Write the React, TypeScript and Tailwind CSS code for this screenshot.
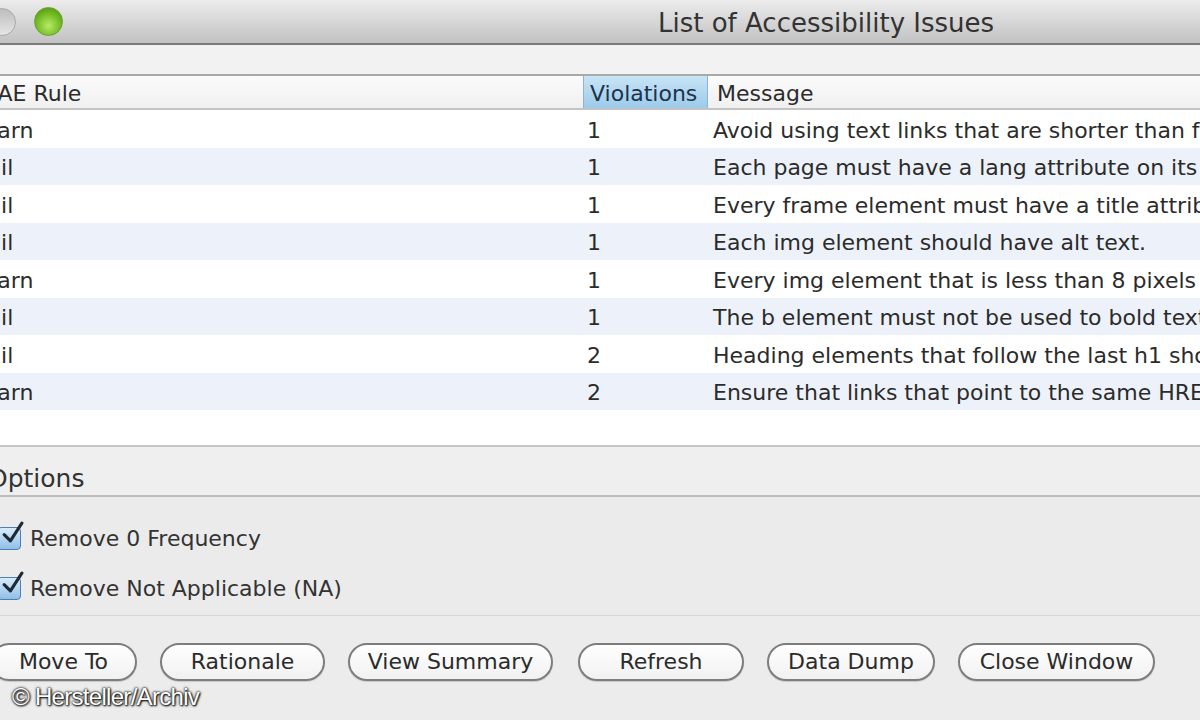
import React from "react";

const rows = [
  { rule: "Warn", count: 1, message: "Avoid using text links that are shorter than four characters." },
  { rule: "Fail", count: 1, message: "Each page must have a lang attribute on its html element." },
  { rule: "Fail", count: 1, message: "Every frame element must have a title attribute." },
  { rule: "Fail", count: 1, message: "Each img element should have alt text." },
  { rule: "Warn", count: 1, message: "Every img element that is less than 8 pixels high or wide." },
  { rule: "Fail", count: 1, message: "The b element must not be used to bold text." },
  { rule: "Fail", count: 2, message: "Heading elements that follow the last h1 should be h2." },
  { rule: "Warn", count: 2, message: "Ensure that links that point to the same HREF use the same text." },
];

const buttons = ["Move To", "Rationale", "View Summary", "Refresh", "Data Dump", "Close Window"];

const Checkbox = () => (
  <span className="relative inline-block h-[23px] w-[24px] shrink-0 rounded-[4px] border border-[#4f7fb2] bg-gradient-to-b from-[#d9ecfb] to-[#8fbfe6]">
    <svg viewBox="0 0 24 24" className="absolute -top-[7px] left-[2px] h-[25px] w-[25px]">
      <path d="M4 13 L10 19 L21 2" fill="none" stroke="#1f2a36" strokeWidth="3" strokeLinecap="round" strokeLinejoin="round" />
    </svg>
  </span>
);

export default function App() {
  return (
    <div
      className="relative h-[720px] w-[1200px] overflow-hidden bg-[#ececec] text-[#2b2b2b]"
      style={{ fontFamily: '"DejaVu Sans", "Noto Sans", sans-serif' }}
    >
      {/* Title bar */}
      <div className="flex h-[45px] items-center border-b-2 border-[#7a7a7a] bg-gradient-to-b from-[#ececec] to-[#c2c2c2]">
        <span className="-ml-[12px] h-[28px] w-[28px] rounded-full border border-[#a9a9a9] bg-gradient-to-b from-[#bdbdbd] to-[#e6e6e6]" />
        <span className="ml-[18px] h-[29px] w-[29px] rounded-full border border-[#6c9e2e] bg-[radial-gradient(circle_at_50%_65%,#b7ec63,#6bb51f_60%,#4f8c14)]" />
        <span className="ml-[595px] pt-[2px] text-[26px] leading-none text-[#333]">List of Accessibility Issues</span>
      </div>

      {/* toolbar strip */}
      <div className="h-[31px] border-b-2 border-[#a9a9a9] bg-[#f2f2f2]" />

      {/* table */}
      <div className="-ml-[23px] bg-white">
        <div className="flex h-[34px] items-stretch border-b-2 border-[#c4c4c4] bg-gradient-to-b from-[#fbfbfb] to-[#f0f0f0] pt-[2px] text-[22px]">
          <div className="flex w-[606px] items-center">WAE Rule</div>
          <div className="-mt-[2px] flex w-[125px] items-center border-x border-[#8fb4d2] bg-gradient-to-b from-[#c8e4f6] to-[#9ccbea] pl-[6px] pt-[2px] text-[#1c3349]">
            Violations
          </div>
          <div className="flex flex-1 items-center pl-[9px]">Message</div>
        </div>
        {rows.map((r, i) => (
          <div
            key={i}
            className={`flex h-[37.5px] items-center whitespace-nowrap pt-[3px] text-[22px] ${i % 2 === 1 ? "bg-[#edf2fa]" : "bg-white"}`}
          >
            <div className="w-[606px]">{r.rule}</div>
            <div className="w-[125px] pl-[4px]">{r.count}</div>
            <div className="flex-1 overflow-hidden pl-[5px]">{r.message}</div>
          </div>
        ))}
        <div className="h-[37px] border-b-2 border-[#c6c6c6]" />
      </div>

      {/* Options header */}
      <div className="flex h-[50px] items-end border-b-2 border-[#bdbdbd] bg-[#efefef] pb-[4px]">
        <span className="-ml-[12px] text-[25px] leading-none text-[#333]">Options</span>
      </div>

      {/* checkboxes */}
      <div className="flex h-[119px] flex-col gap-[20px] border-b border-[#d6d6d6] bg-[#ebebeb] pt-[26px]">
        <label className="-ml-[3px] flex h-[30px] items-center gap-[9px] text-[22px] text-[#333]">
          <Checkbox />
          Remove 0 Frequency
        </label>
        <label className="-ml-[3px] flex h-[30px] items-center gap-[9px] text-[22px] text-[#333]">
          <Checkbox />
          Remove Not Applicable (NA)
        </label>
      </div>

      {/* buttons */}
      <div className="flex gap-[23px] bg-[#ececec] pt-[27px]">
        {buttons.map((b, i) => (
          <button
            key={b}
            className={`h-[38px] rounded-full border-2 border-[#7d7d7d] bg-gradient-to-b from-white to-[#f1f1f1] text-[22px] leading-none text-[#2b2b2b] shadow-[0_1px_1px_rgba(0,0,0,0.15)] ${
              i === 0 ? "-ml-[10px] w-[147px]" : i === 1 ? "w-[165px]" : i === 2 ? "w-[205px]" : i === 3 ? "ml-[2px] w-[166px]" : i === 4 ? "w-[168px]" : "w-[197px]"
            }`}
          >
            {b}
          </button>
        ))}
      </div>

      {/* watermark */}
      <div
        className="absolute bottom-[5px] left-[12px] text-[24px] tracking-[-0.7px] text-white"
        style={{ fontFamily: '"Liberation Sans", Arial, sans-serif', textShadow: "0 0 2px #000, 0 0 3px #333, 1px 1px 2px #000" }}
      >
        © Hersteller/Archiv
      </div>
    </div>
  );
}
